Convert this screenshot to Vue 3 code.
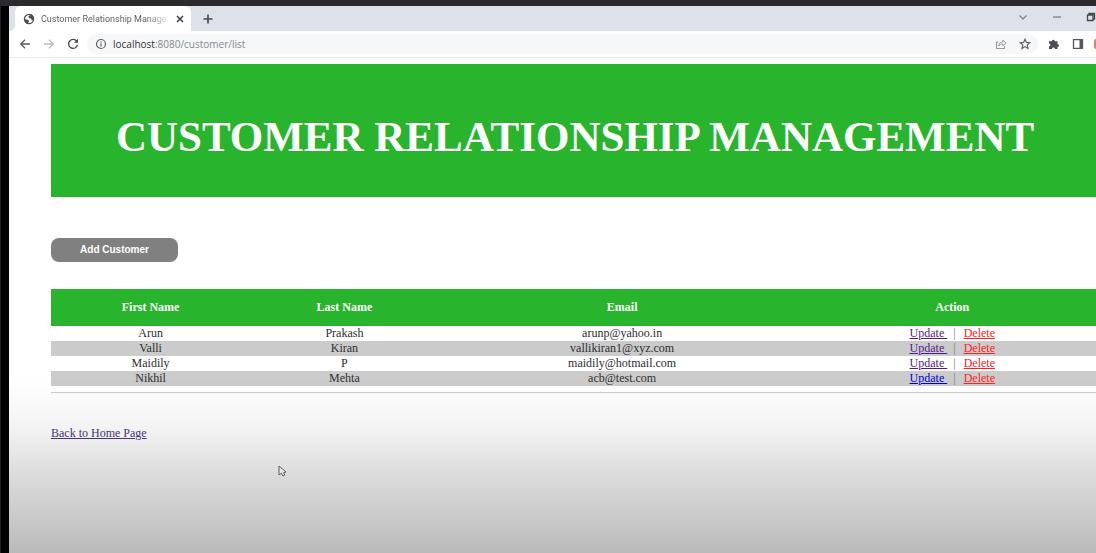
<script setup>
const customers = [
  { first: 'Arun', last: 'Prakash', email: 'arunp@yahoo.in', visited: true },
  { first: 'Valli', last: 'Kiran', email: 'vallikiran1@xyz.com', visited: true },
  { first: 'Maidily', last: 'P', email: 'maidily@hotmail.com', visited: true },
  { first: 'Nikhil', last: 'Mehta', email: 'acb@test.com', visited: false },
]
</script>

<template>
  <div class="frame">
    <div class="browser">
      <div class="tabs">
        <div class="edge"></div>
        <div class="tab">
          <svg class="globe" viewBox="0 0 12 12" aria-hidden="true">
            <circle cx="6" cy="6" r="4.600" fill="#fff" stroke="#4b4e52" stroke-width="1.2" />
            <path d="M1.2 5.2 3 6.4l2.400.3.6 1.500-.8 1.300V11C2.800 10.600 1 8.500 1.200 5.200Z" fill="#4b4e52" />
            <path d="M5.500 1h2.300c2 .8 3.200 2.600 3.200 5l-.8 1.600-1.700-.4-.5-1.700-2-.3-.6-1.600 1.300-.9Z" fill="#4b4e52" />
          </svg>
          <span class="tab-title">Customer Relationship Manage</span>
          <button class="icon-btn" aria-label="Close tab">
            <svg class="close" viewBox="0 0 8 8"><path d="M1 1l6 6M7 1L1 7" stroke="#3c4043" stroke-width="1.5" /></svg>
          </button>
        </div>
        <button class="icon-btn new-tab" aria-label="New tab">
          <svg class="plus" viewBox="0 0 10 10"><path d="M5 .5v9M.5 5h9" stroke="#45484c" stroke-width="1.6" /></svg>
        </button>
        <div class="window-controls">
          <button class="icon-btn" aria-label="Search tabs">
            <svg class="ctl" viewBox="0 0 10 10"><path d="M1.500 3.500 5 7l3.500-3.500" fill="none" stroke="#7b7e84" stroke-width="1.200" /></svg>
          </button>
          <button class="icon-btn" aria-label="Minimize">
            <svg class="ctl" viewBox="0 0 10 10"><path d="M1 5h8" stroke="#74777c" stroke-width="1.200" /></svg>
          </button>
          <button class="icon-btn" aria-label="Restore">
            <svg class="ctl" viewBox="0 0 10 10"><path d="M1.500 3h5.500v5.500H1.500zM3 3V1.500h5.500V7H7" fill="none" stroke="#45484c" stroke-width="1.300" /></svg>
          </button>
        </div>
      </div>

      <div class="toolbar">
        <button class="icon-btn" aria-label="Back">
          <svg class="nav" viewBox="0 0 12 12"><path d="M11 6H2M6 1.800 1.800 6 6 10.200" fill="none" stroke="#5a5d61" stroke-width="1.300" /></svg>
        </button>
        <button class="icon-btn" aria-label="Forward">
          <svg class="nav" viewBox="0 0 12 12"><path d="M1 6h9M6 1.800 10.200 6 6 10.200" fill="none" stroke="#b9bbbe" stroke-width="1.300" /></svg>
        </button>
        <button class="icon-btn" aria-label="Reload">
          <svg class="nav" viewBox="0 0 12 12">
            <path d="M9.800 3.300A4.500 4.500 0 1 0 10.500 7" fill="none" stroke="#4b4e52" stroke-width="1.300" />
            <path d="M11 .8v4H7z" fill="#4b4e52" />
          </svg>
        </button>
        <div class="address">
          <svg class="info" viewBox="0 0 12 12" aria-hidden="true">
            <circle cx="6" cy="6" r="4.500" fill="none" stroke="#5f6368" stroke-width="1.200" />
            <path d="M6 5.300v3.200M6 3.300v1.200" stroke="#5f6368" stroke-width="1.200" />
          </svg>
          <span class="url"><b>localhost</b>:8080/customer/list</span>
          <button class="icon-btn" aria-label="Share">
            <svg class="nav" viewBox="0 0 12 12">
              <path d="M3.500 4H1.500v6.500h8V8" fill="none" stroke="#96999d" stroke-width="1.100" />
              <path d="M3.800 8c.2-2.800 1.700-4 4-4V2L11 5 7.800 7.800V6C6 6 4.800 6.500 3.800 8Z" fill="none" stroke="#96999d" />
            </svg>
          </button>
          <button class="icon-btn" aria-label="Bookmark">
            <svg class="nav" viewBox="0 0 12 12"><path d="M6 1.200 7.400 4.400l3.500.3-2.700 2.300.8 3.400L6 8.600 3 10.400 3.800 7 1.100 4.700l3.500-.3Z" fill="none" stroke="#5f6368" stroke-width="1.200" /></svg>
          </button>
        </div>
        <div class="extras">
          <button class="icon-btn" aria-label="Extensions">
            <svg class="nav" viewBox="0 0 12 12"><path d="M1 3.300h2.800a1.500 1.500 0 1 1 3 0h2.700v2.800a1.500 1.500 0 1 1 0 3V11H6.900a1.400 1.400 0 1 0-2.800 0H1V8.300a1.400 1.400 0 1 0 0-2.800Z" fill="#4b4e52" /></svg>
          </button>
          <button class="icon-btn" aria-label="Side panel">
            <svg class="nav" viewBox="0 0 12 12"><path d="M1.500 1.700h9v8.600h-9z" fill="none" stroke="#55585c" stroke-width="1.300" /><path d="M7.500 1.500h3v9h-3z" fill="#55585c" /></svg>
          </button>
          <span class="avatar"></span>
        </div>
      </div>

      <main class="page">
        <header class="banner"><h1>CUSTOMER RELATIONSHIP MANAGEMENT</h1></header>
        <button class="add">Add Customer</button>
        <table>
          <colgroup>
            <col class="c-first" /><col class="c-last" /><col class="c-email" /><col class="c-action" />
          </colgroup>
          <thead>
            <tr><th>First Name</th><th>Last Name</th><th>Email</th><th>Action</th></tr>
          </thead>
          <tbody>
            <tr v-for="c in customers" :key="c.email">
              <td>{{ c.first }}</td>
              <td>{{ c.last }}</td>
              <td>{{ c.email }}</td>
              <td>
                <a href="#update" class="update" :class="{ visited: c.visited }">Update&nbsp;</a><span class="bar">|</span><a href="#delete" class="delete">Delete</a>
              </td>
            </tr>
          </tbody>
        </table>
        <hr />
        <a href="#home" class="home">Back to Home Page</a>
      </main>
    </div>
    <div class="shade"></div>
    <svg class="cursor" viewBox="0 0 9 12" aria-hidden="true"><path d="M1 1v9l2.300-1.800L5 11l1.800-.9-1.300-2.400L8 7Z" fill="#e8e8e8" stroke="#5c5c5c" /></svg>
  </div>
</template>

<style>
html,
body,
#app {
  height: 100%;
}
body {
  margin: 0;
  overflow: hidden;
}
</style>

<style scoped>
.frame {
  position: relative;
  box-sizing: border-box;
  min-height: 100%;
  display: flex;
  border-top: 6px solid #2b2a2c;
  border-left: 1px solid #222;
  background: #000;
  padding-left: 8px;
  overflow: hidden;
}
.browser {
  flex: 1;
  min-width: 0;
  background: #fff;
  font-family: "Open Sans", "Noto Sans", sans-serif;
}
.icon-btn {
  display: flex;
  flex: none;
  padding: 0;
  border: 0;
  background: none;
}
.tabs {
  display: flex;
  align-items: stretch;
  height: 25px;
  background: #dee1ea;
}
.edge {
  width: 6px;
  background: #dee1ea;
  border-bottom-right-radius: 6px;
  box-shadow: 0 6px 0 #fff;
}
.tab {
  display: flex;
  align-items: center;
  box-sizing: border-box;
  width: 176px;
  padding: 0 7px 0 8px;
  background: #fff;
  border-radius: 6px 6px 0 0;
}
.globe {
  flex: none;
  width: 12px;
  height: 12px;
}
.tab-title {
  flex: 1;
  margin: 0 4px 0 6px;
  white-space: nowrap;
  font-family: Roboto, "Noto Sans", sans-serif;
  font-size: 9px;
  line-height: 14px;
  color: #606367;
  mask-image: linear-gradient(90deg, #000 80%, transparent);
}
.close {
  width: 8px;
  height: 8px;
}
.new-tab {
  align-items: center;
  margin-left: 12px;
}
.plus {
  width: 10px;
  height: 10px;
}
.window-controls {
  display: flex;
  align-items: center;
  gap: 24px;
  margin-left: auto;
  padding-bottom: 4px;
}
.ctl {
  width: 10px;
  height: 10px;
}
.toolbar {
  display: flex;
  align-items: center;
  gap: 12px;
  height: 26px;
  padding-left: 10px;
  border-bottom: 1px solid #ebebec;
}
.nav {
  width: 12px;
  height: 12px;
}
.address {
  flex: 1;
  display: flex;
  align-items: center;
  gap: 12px;
  height: 20px;
  margin-left: -4px;
  padding: 0 7px 0 8px;
  border-radius: 10px;
  background: #f6f7f8;
}
.info {
  width: 12px;
  height: 12px;
}
.url {
  flex: 1;
  margin-left: -6px;
  font-size: 10px;
  line-height: 14px;
  color: #85888c;
}
.url b {
  font-weight: 400;
  color: #303236;
}
.extras {
  display: flex;
  align-items: center;
  gap: 12px;
}
.extras .icon-btn:first-child {
  margin-left: -2px;
}
.avatar {
  width: 2px;
  height: 10px;
  margin-left: -2px;
  border-radius: 4px 0 0 4px;
  background: #d98478;
}
.page {
  margin-right: -3px;
  padding: 6px 0 0 42px;
  font-family: "Liberation Serif", "Times New Roman", serif;
  font-size: 12px;
  line-height: 15px;
  color: #2e2e2e;
}
.banner {
  padding: 49px 0 36px;
  background: #28b52d;
  text-align: center;
}
h1 {
  margin: 0;
  font-size: 43px;
  line-height: 48px;
  color: #fff;
  white-space: nowrap;
}
.add {
  display: block;
  width: 127px;
  height: 24px;
  margin: 41px 0 27px;
  padding: 0;
  border: 0;
  border-radius: 8px;
  background: #808080;
  color: #fff;
  font: bold 10px/14px "Liberation Sans", Arial, sans-serif;
}
table {
  width: 100%;
  table-layout: fixed;
  border-collapse: collapse;
  text-align: center;
}
.c-first {
  width: 19%;
}
.c-last {
  width: 18%;
}
.c-email {
  width: 35%;
}
.c-action {
  width: 28%;
}
th {
  height: 37px;
  padding: 0;
  background: #28b52d;
  color: #fff;
}
td {
  height: 15px;
  padding: 0;
}
tbody tr:nth-child(even) {
  background: #cbcbcb;
}
.update {
  color: #0000e0;
}
.update.visited {
  color: #551a8b;
}
.bar {
  margin: 0 8px 0 6px;
  color: #777;
}
.delete {
  color: #f22;
}
hr {
  height: 1px;
  margin: 6px 0 33px;
  border: 0;
  background: #ccc;
}
.home {
  color: #4b3a78;
}
.shade {
  position: absolute;
  inset: auto 0 0 8px;
  height: 175px;
  background: linear-gradient(rgba(0, 0, 0, 0), rgba(0, 0, 0, 0.05) 30%, rgba(0, 0, 0, 0.14) 56%, rgba(0, 0, 0, 0.27));
  pointer-events: none;
}
.cursor {
  position: absolute;
  left: 277px;
  top: 459px;
  width: 9px;
  height: 12px;
}
</style>
